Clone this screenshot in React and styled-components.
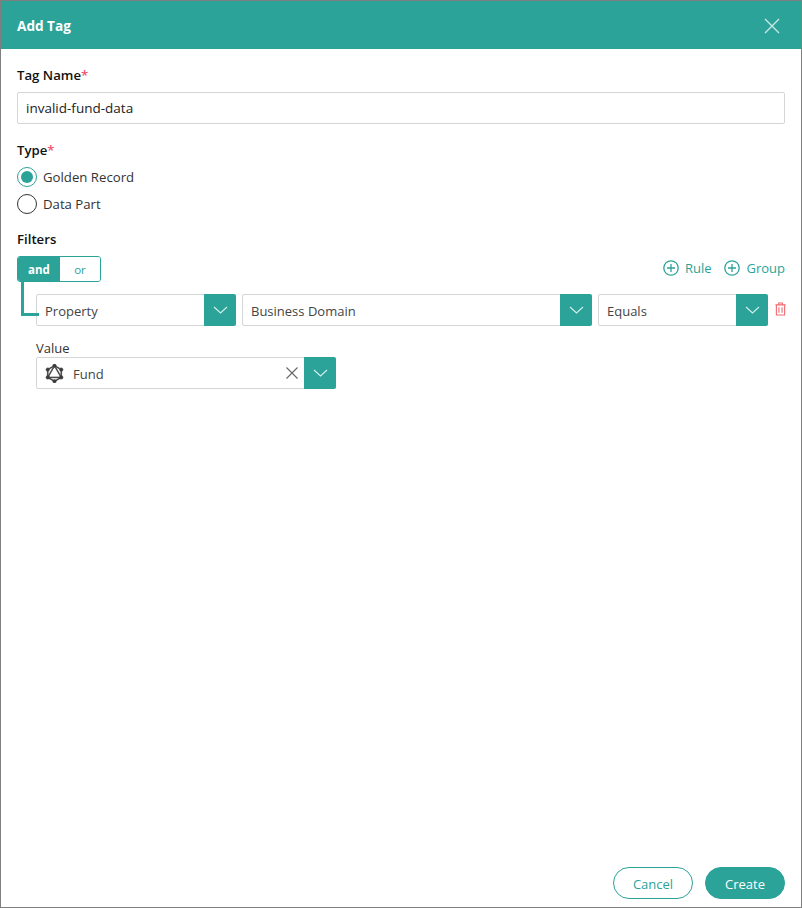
import React from "react"
import styled, { createGlobalStyle } from "styled-components"
import { SiGraphql } from "react-icons/si"

const teal = "#2ba399"

const GlobalStyle = createGlobalStyle`
  html, body {
    margin: 0;
    padding: 0;
    background: #fff;
  }
  * {
    box-sizing: border-box;
  }
`

const Dialog = styled.div`
  width: 802px;
  height: 908px;
  border: 1px solid #7f7f7f;
  display: flex;
  flex-direction: column;
  font-family: "Open Sans", "Noto Sans", sans-serif;
  font-size: 13px;
  color: #333;
  background: #fff;
`

const Header = styled.header`
  height: 48px;
  flex: none;
  background: ${teal};
  display: flex;
  align-items: center;
  justify-content: space-between;
  padding: 1px 21px 0 16px;
  color: #fff;
`

const Title = styled.h1`
  margin: 0;
  font-size: 13.6px;
  font-weight: 700;
`

const CloseButton = styled.button`
  border: 0;
  padding: 0;
  background: none;
  display: flex;
  color: #c5e8e5;
`

const Body = styled.div`
  flex: 1;
  padding: 17px 16px 0;
`

const Label = styled.div`
  font-size: 13.2px;
  font-weight: 600;
  color: #111;
  line-height: 18px;
`

const Required = styled.span`
  color: #f0506e;
`

const TextInput = styled.div`
  height: 32px;
  margin-top: 8px;
  border: 1px solid #d2d6d6;
  border-radius: 2px;
  padding: 0 8px;
  display: flex;
  align-items: center;
  color: #222;
  font-size: 13.5px;
`

const TypeSection = styled.div`
  margin-top: 17px;
`

const RadioList = styled.div`
  margin-top: 8px;
  display: flex;
  flex-direction: column;
  gap: 7px;
`

const RadioRow = styled.label`
  display: flex;
  align-items: center;
  gap: 6px;
  height: 20px;
  font-size: 13.2px;
  color: #333;
`

const RadioCircle = styled.span`
  width: 20px;
  height: 20px;
  border-radius: 50%;
  border: 1.5px solid ${({ $on }) => ($on ? teal : "#333")};
  display: flex;
  align-items: center;
  justify-content: center;
  &::after {
    content: "";
    display: ${({ $on }) => ($on ? "block" : "none")};
    width: 12px;
    height: 12px;
    border-radius: 50%;
    background: ${teal};
  }
`

const FiltersSection = styled.div`
  margin-top: 16px;
`

const ToolRow = styled.div`
  margin-top: 8px;
  display: flex;
  justify-content: space-between;
  align-items: center;
`

const Toggle = styled.div`
  display: flex;
  width: 84px;
  height: 26px;
  border: 1px solid ${teal};
  border-radius: 3px;
  overflow: hidden;
`

const ToggleItem = styled.div`
  flex: ${({ $on }) => ($on ? "0 0 42px" : 1)};
  display: flex;
  align-items: center;
  justify-content: center;
  font-size: 11.5px;
  font-weight: ${({ $on }) => ($on ? 700 : 400)};
  background: ${({ $on }) => ($on ? teal : "#fff")};
  color: ${({ $on }) => ($on ? "#fff" : teal)};
`

const Actions = styled.div`
  display: flex;
  gap: 13px;
  margin-bottom: 2px;
`

const ActionLink = styled.a`
  display: flex;
  align-items: center;
  gap: 6px;
  color: ${teal};
  font-size: 13px;
`

const RuleRow = styled.div`
  position: relative;
  margin: 12px 0 0 19px;
  display: flex;
  align-items: center;
  gap: 6px;
  &::before {
    content: "";
    position: absolute;
    left: -15px;
    top: -12px;
    width: 15px;
    height: 31px;
    border-left: 3px solid ${teal};
    border-bottom: 3px solid ${teal};
  }
`

const Select = styled.div`
  flex: none;
  width: ${({ $width }) => $width}px;
  height: 32px;
  border: 1px solid #d2d6d6;
  border-radius: 2px;
  display: flex;
  align-items: center;
  padding-left: 8px;
  font-size: 13px;
  color: #444;
`

const SelectText = styled.span`
  flex: 1;
  padding-top: 2px;
`

const Caret = styled.span`
  width: 32px;
  height: 32px;
  margin: -1px -1px -1px 0;
  flex: none;
  background: ${teal};
  border-radius: 0 2px 2px 0;
  display: flex;
  align-items: center;
  justify-content: center;
`

const Trash = styled.span`
  display: flex;
  flex: none;
  margin: 0 0 3px 1px;
`

const ValueBlock = styled.div`
  margin: 14px 0 0 19px;
`

const ValueLabel = styled.div`
  font-size: 13px;
  line-height: 17px;
  color: #333;
`

const ValueIcon = styled.span`
  display: flex;
  margin-right: 9px;
  color: #3a3a3a;
  svg {
    stroke: currentColor;
    stroke-width: 0.8;
  }
`

const ClearButton = styled.span`
  display: flex;
  margin-right: 6px;
  color: #666;
`

const Footer = styled.footer`
  flex: none;
  display: flex;
  justify-content: flex-end;
  gap: 12px;
  padding: 0 16px 8px;
`

const PillButton = styled.button`
  width: 80px;
  height: 32px;
  border-radius: 16px;
  border: 1px solid ${teal};
  background: ${({ $primary }) => ($primary ? teal : "#fff")};
  color: ${({ $primary }) => ($primary ? "#fff" : teal)};
  font-family: inherit;
  font-size: 13px;
  padding: 1px 0 0;
`

const Chevron = () => (
  <svg width="15" height="8" viewBox="0 0 15 8" fill="none" stroke="#d5efec" strokeWidth="1.1">
    <path d="M1 1l6.5 6L14 1" />
  </svg>
)

const PlusCircle = () => (
  <svg width="16" height="16" viewBox="0 0 16 16" fill="none" stroke={teal} strokeWidth="1.3">
    <circle cx="8" cy="8" r="7.2" />
    <path d="M8 4v8M4 8h8" />
  </svg>
)

const RuleSelect = ({ width, children }) => (
  <Select $width={width}>
    <SelectText>{children}</SelectText>
    <Caret>
      <Chevron />
    </Caret>
  </Select>
)

const App = () => (
  <>
    <GlobalStyle />
    <Dialog>
      <Header>
        <Title>Add Tag</Title>
        <CloseButton>
          <svg width="16" height="16" viewBox="0 0 16 16" fill="none" stroke="currentColor" strokeWidth="1.4">
            <path d="M1 1l14 14M15 1L1 15" />
          </svg>
        </CloseButton>
      </Header>
      <Body>
        <Label>
          Tag Name<Required>*</Required>
        </Label>
        <TextInput>invalid-fund-data</TextInput>
        <TypeSection>
          <Label>
            Type<Required>*</Required>
          </Label>
          <RadioList>
            <RadioRow>
              <RadioCircle $on />
              Golden Record
            </RadioRow>
            <RadioRow>
              <RadioCircle />
              Data Part
            </RadioRow>
          </RadioList>
        </TypeSection>
        <FiltersSection>
          <Label>Filters</Label>
          <ToolRow>
            <Toggle>
              <ToggleItem $on>and</ToggleItem>
              <ToggleItem>or</ToggleItem>
            </Toggle>
            <Actions>
              <ActionLink>
                <PlusCircle />
                Rule
              </ActionLink>
              <ActionLink>
                <PlusCircle />
                Group
              </ActionLink>
            </Actions>
          </ToolRow>
          <RuleRow>
            <RuleSelect width={200}>Property</RuleSelect>
            <RuleSelect width={350}>Business Domain</RuleSelect>
            <RuleSelect width={170}>Equals</RuleSelect>
            <Trash>
              <svg width="11" height="14" viewBox="0 0 12 15" fill="none" stroke="#ee6a6f" strokeWidth="1.2">
                <path d="M0.5 3h11M4 3V1h4v2M1.5 3v11h9V3M4.3 5.5v6M7.7 5.5v6" />
              </svg>
            </Trash>
          </RuleRow>
          <ValueBlock>
            <ValueLabel>Value</ValueLabel>
            <Select $width={300}>
              <ValueIcon>
                <SiGraphql size={19} />
              </ValueIcon>
              <SelectText>Fund</SelectText>
              <ClearButton>
                <svg width="12" height="12" viewBox="0 0 12 12" fill="none" stroke="currentColor" strokeWidth="1.1">
                  <path d="M0.5 0.5l11 11M11.5 0.5l-11 11" />
                </svg>
              </ClearButton>
              <Caret>
                <Chevron />
              </Caret>
            </Select>
          </ValueBlock>
        </FiltersSection>
      </Body>
      <Footer>
        <PillButton>Cancel</PillButton>
        <PillButton $primary>Create</PillButton>
      </Footer>
    </Dialog>
  </>
)

export default App
